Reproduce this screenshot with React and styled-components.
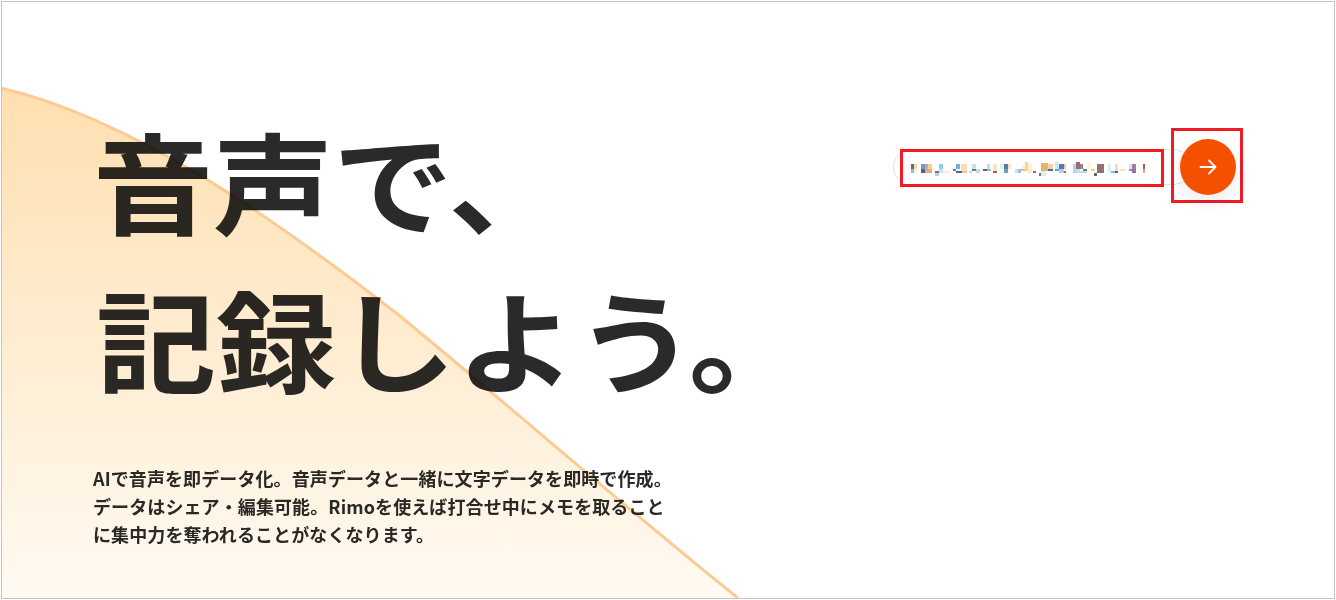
import React from 'react';
import styled, { createGlobalStyle } from 'styled-components';

const GlobalStyle = createGlobalStyle`
  html, body {
    margin: 0;
    padding: 0;
    background: #fff;
  }
`;

// hero curve, page coordinates
const CURVE = 'M1 88 C 130 118 270 215 400 316 C 520 415 640 520 738 598';

// blurred url, [x, y, w, h, colour]
const MOSAIC = [
  [3, 6, 3, 5, '#6b6b6b'], [3, 11, 3, 4, '#7fc4e6'], [6, 6, 3, 5, '#f7d8b4'], [6, 11, 3, 4, '#fdeed8'],
  [13, 6, 4, 5, '#6f9bd1'], [13, 11, 4, 4, '#5a5f8a'], [17, 6, 3, 5, '#b9a9b8'], [20, 6, 4, 5, '#f6cda0'],
  [17, 11, 7, 4, '#d9b27a'], [27, 13, 4, 2, '#c25a5a'], [27, 15, 4, 3, '#a8d8f0'], [31, 6, 4, 5, '#8ad0ee'],
  [31, 11, 4, 4, '#c5e8f5'], [35, 13, 7, 2, '#fdf0d8'], [45, 11, 3, 2, '#777777'], [48, 6, 4, 5, '#6db3dc'],
  [48, 13, 6, 2, '#5a5fa0'], [53, 6, 6, 7, '#fbdcba'], [54, 13, 5, 2, '#f2c48e'], [61, 13, 3, 2, '#b5dcf0'],
  [64, 6, 4, 5, '#bfe3f7'], [64, 11, 4, 2, '#777777'], [68, 11, 4, 4, '#c8d8e8'], [75, 11, 4, 2, '#666666'],
  [79, 6, 3, 5, '#b7ddf5'], [79, 11, 4, 2, '#8fb9d9'], [85, 6, 4, 7, '#fde1c2'], [85, 13, 4, 2, '#a5606a'],
  [92, 6, 4, 5, '#d5f3f0'], [96, 6, 4, 5, '#5e7f99'], [96, 11, 4, 4, '#6d9cc9'], [100, 6, 3, 5, '#fce3c6'],
  [107, 11, 3, 4, '#bfe3f7'], [110, 11, 3, 4, '#8ec4e4'], [113, 7, 4, 4, '#fdf2d5'], [113, 11, 4, 2, '#e6bd6a'],
  [117, 4, 3, 9, '#f4d4a2'], [120, 5, 4, 6, '#fff3c8'], [120, 11, 4, 4, '#fdeecb'],
  [125, 13, 3, 2, '#777777'], [131, 15, 2, 3, '#777777'], [133, 5, 7, 8, '#e1b56b'], [133, 13, 5, 5, '#d4f2ee'],
  [140, 6, 5, 5, '#f6d0a5'], [140, 11, 5, 2, '#5a5fa8'], [147, 4, 4, 7, '#c5ecf8'], [147, 11, 4, 2, '#6aa0d0'],
  [151, 6, 5, 5, '#6d6db8'], [151, 11, 5, 4, '#a5d5f0'], [156, 6, 2, 5, '#f3c89a'], [156, 13, 2, 2, '#b85f5f'],
  [165, 6, 3, 9, '#a8d8f2'], [168, 4, 4, 7, '#9c6c70'], [168, 11, 4, 4, '#c9dae8'], [172, 6, 3, 5, '#a67a7a'],
  [172, 13, 7, 2, '#b5dcf0'], [175, 11, 4, 2, '#777777'], [179, 4, 4, 7, '#fdf9d8'], [183, 11, 4, 2, '#f4cc90'],
  [186, 15, 3, 3, '#666666'], [189, 6, 7, 7, '#9c6c70'], [189, 13, 4, 2, '#777777'], [193, 13, 3, 2, '#8a6aa0'],
  [200, 6, 3, 9, '#d4f2f5'], [203, 13, 4, 2, '#8fb9e0'], [207, 6, 3, 7, '#fcdcb8'], [207, 13, 3, 2, '#5a5fa8'],
  [212, 11, 5, 2, '#fde1c2'], [221, 6, 3, 5, '#c8f0f0'], [221, 11, 3, 2, '#6aa0d0'], [224, 6, 4, 5, '#a87aa0'],
  [224, 11, 4, 4, '#a06ab0'], [235, 6, 2, 5, '#a05f6a'], [235, 11, 2, 4, '#d8b080'],
];

export default function App() {
  return (
    <Page>
      <GlobalStyle />
      <Hero>
        <Heading>
          <HeadingLine>音声で、</HeadingLine>
          <HeadingLine $indent={3}>記録しよう。</HeadingLine>
        </Heading>
        <Lead>
          AIで音声を即データ化。音声データと一緒に文字データを即時で作成。
          <br />
          データはシェア・編集可能。Rimoを使えば打合せ中にメモを取ること
          <br />
          に集中力を奪われることがなくなります。
        </Lead>
      </Hero>
      <Wave viewBox="0 0 1336 600" aria-hidden="true">
        <defs>
          <linearGradient id="waveFill" x1="0" y1="0" x2="0" y2="1">
            <stop offset="0" stopColor="#fedfb0" />
            <stop offset="1" stopColor="#fffaf2" />
          </linearGradient>
        </defs>
        <path d={`${CURVE} L1 598 Z`} fill="url(#waveFill)" />
        <path d={CURVE} fill="none" stroke="#fccb94" strokeWidth="3" />
      </Wave>
      <UrlForm>
        <UrlField />
        <Redaction>
          <Mosaic viewBox="0 0 250 20" aria-hidden="true">
            {MOSAIC.map(([x, y, w, h, colour], i) => (
              <rect key={i} x={x} y={y} width={w} height={h} fill={colour} />
            ))}
          </Mosaic>
        </Redaction>
        <SubmitMark>
          <Submit type="button" aria-label="送信">
            <svg width="20" height="20" viewBox="0 0 20 20" fill="none" stroke="#fff" strokeWidth="1.8" strokeLinecap="round" strokeLinejoin="round">
              <path d="M2.5 10h15M11 3.5l6.5 6.5-6.5 6.5" />
            </svg>
          </Submit>
        </SubmitMark>
      </UrlForm>
    </Page>
  );
}

const Page = styled.main`
  position: relative;
  box-sizing: border-box;
  width: 1334px;
  height: 598px;
  margin: 1px;
  overflow: hidden;
  display: flex;
  justify-content: space-between;
  align-items: flex-start;
  padding: 98px 91px 0 91px;
  border: 1px solid #c4c4c4;
  background: #fff;
  color: #2a2a2a;
  font-family: "Noto Sans CJK JP", "Noto Sans", sans-serif;
`;

const Wave = styled.svg`
  position: absolute;
  left: -2px;
  top: -2px;
  width: 1336px;
  height: 600px;
  mix-blend-mode: multiply;
  pointer-events: none;
`;

const Hero = styled.section`
  display: flex;
  flex-direction: column;
`;

const Heading = styled.h1`
  margin: 0;
  font-size: 120px;
  font-weight: 700;
  line-height: 158px;
`;

const HeadingLine = styled.span`
  display: block;
  padding-left: ${({ $indent }) => $indent || 0}px;
  white-space: nowrap;
  transform: scaleY(0.92);
`;

const Lead = styled.p`
  margin: 48px 0 0;
  font-size: 18px;
  font-weight: 700;
  line-height: 28px;
  letter-spacing: 0.1px;
  white-space: nowrap;
`;

const UrlForm = styled.form`
  position: relative;
  display: flex;
  align-items: center;
  margin: 28px 0 0;
`;

const UrlField = styled.div`
  box-sizing: border-box;
  width: 298px;
  height: 36px;
  margin: 3px -20px 0 0;
  border: 1px solid #e0e0e0;
  border-radius: 18px;
`;

const Redaction = styled.div`
  position: absolute;
  left: 7px;
  top: 21px;
  box-sizing: border-box;
  width: 264px;
  height: 38px;
  padding: 6px 0 0 5px;
  border: 3px solid #ee1c25;
  background: #fff;
`;

const Mosaic = styled.svg`
  display: block;
  width: 250px;
  height: 20px;
`;

const SubmitMark = styled.div`
  position: relative;
  box-sizing: border-box;
  width: 72px;
  height: 75px;
  padding: 8px 7px 8px 6px;
  border: 3px solid #ee1c25;
`;

const Submit = styled.button`
  display: flex;
  align-items: center;
  justify-content: center;
  width: 56px;
  height: 56px;
  padding: 0;
  border: none;
  border-radius: 50%;
  background: #f55000;
  box-shadow: 0 8px 20px rgba(0, 0, 0, 0.08);
`;
